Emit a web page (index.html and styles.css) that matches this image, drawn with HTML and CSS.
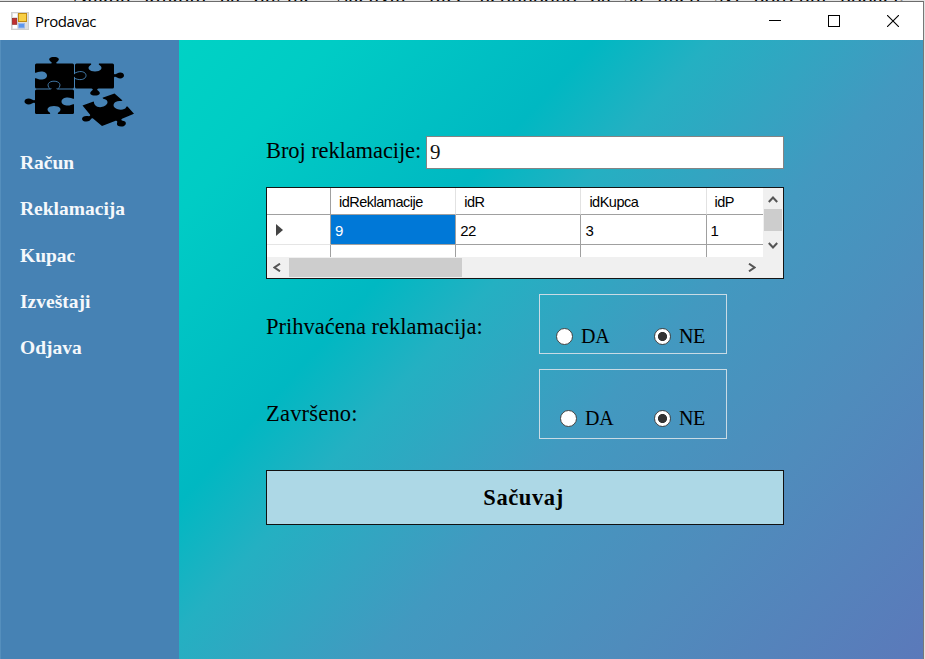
FILE: index.html
```
<!DOCTYPE html>
<html lang="sr">
<head>
<meta charset="utf-8">
<title>Prodavac</title>
<link rel="stylesheet" href="styles.css">
</head>
<body>
<div class="behind"><span>Nakon klikom na dugme „Sačuvaj“ biće neophodno da su uneti svi potrebni podaci.</span></div>
<div class="window">
  <header class="titlebar">
    <svg class="appicon" width="18" height="18" viewBox="0 0 18 18">
      <rect x=".5" y=".5" width="17" height="17" fill="#dedede" stroke="#cfcfcf"/>
      <rect x="2" y="1.500" width="4" height="3.500" fill="#fff"/><rect x="2" y="13" width="4" height="3.500" fill="#fff"/>
      <rect x="1.300" y="6.300" width="4.500" height="6" fill="#c03030" stroke="#8f1d1d" stroke-width=".6"/>
      <rect x="7.500" y="1.500" width="8" height="8" fill="#f8cf45" stroke="#c08a10"/>
      <rect x="7.500" y="11.500" width="6" height="4.500" fill="#5d97ee" stroke="#9db9ea"/>
    </svg>
    <h1 class="title">Prodavac</h1>
    <div class="controls">
      <svg width="12" height="12"><path d="M0 5.500H12" stroke="#000"/></svg>
      <svg width="12" height="12"><rect x=".5" y=".5" width="11" height="11" fill="none" stroke="#000"/></svg>
      <svg width="12" height="12"><path d="M0 0L12 12M12 0L0 12" stroke="#000" stroke-width="1.100"/></svg>
    </div>
  </header>
  <div class="body">
    <nav class="sidebar">
      <svg class="logo" width="110" height="70" viewBox="24 17 110 70">
        <rect x="35" y="23.500" width="39" height="25" rx="1.500"/>
        <rect x="75" y="23.500" width="39" height="25" rx="1.500"/>
        <rect x="35" y="49.500" width="39" height="24.500" rx="1.500"/>
        <path d="M50.500 24.500C52.500 23 52 22.500 50.500 21.500C47.500 19 50 17 54 17S60.500 19 57.500 21.500C56 22.500 55.500 23 57.500 24.500Z"/>
        <path d="M113 32.500C114.500 35 115.500 34.500 117 33.500C120.500 31.500 124 33 124 35.500S120.500 39.500 117 37.500C115.500 36.500 114.500 36 113 38.500Z"/>
        <path d="M91.500 48C93.500 49.500 93 50 91.500 51C88.500 53.500 91 55.500 95 55.500S101.500 53.500 98.500 51C97 50 96.500 49.500 98.500 48Z"/>
        <path d="M36 58.500C34.500 61 33.500 60.500 32 59.500C28.500 57.500 24.500 59 24.500 61.500S28.500 65.500 32 63.500C33.500 62.500 34.500 62 36 64.500Z"/>
        <g fill="#4682b4">
          <path d="M34 32.800C36 33 37 32.500 38 32C42 30.500 47 32 47 35.500S42 40.500 38 39C37 38.500 36 38 34 38.200Z"/>
          <path d="M91 23C91.500 24.500 91 25 90 25.500C86.500 28 89.500 31.500 95 31.500S103.500 28 100 25.500C99 25 98.500 24.500 99 23Z"/>
          <path d="M75 58.800C73 59 72 58.500 71 58C67 56.500 61.500 58 61.500 61.500S67 66.500 71 65C72 64.500 73 64 75 64.200Z"/>
          <path d="M50 74.500C50.500 73 50 72.500 49 72C45.500 69 48.500 66 54 66S62.500 69 59 72C58 72.500 57.500 73 58 74.500Z"/>
        </g>
        <path d="M50.500 50C52.500 48.500 52 48 50.500 47C47.500 44.500 50 42.500 54 42.500S60.500 44.500 57.500 47C56 48 55.500 48.500 57.500 50Z"/>
        <path d="M73 32.500C74.500 35 75.500 34.500 77 33.500C80.500 31.500 84.500 33 84.500 35.500S80.500 39.500 77 37.500C75.500 36.500 74.500 36 73 38.500Z"/>
        <g fill="none" stroke="#4682b4" stroke-width=".9">
          <path d="M50 48.800C46 45 48.500 41.200 54 41.200S62 45 58 48.800"/>
          <path d="M75 33C81 30 86 32 86 35.500S81 41 75 38.500"/>
        </g>
        <path d="M82.500 65.500L93.500 61.500C94.500 62 93.500 63 95 65C97.500 68 102 67.500 104.500 66C108.500 64 108 61 106 59.800C104.500 59 103.500 59.500 102.500 57.800L114.500 53.500L122.500 60.500C121 61.500 118 60.500 115.500 62C112.500 64 113 67.500 117 69C121 70.500 125 69.500 126 67.500C126.500 66.500 126 66.500 127.500 66.500L134 73.800L122 78.800C120.500 80 121.500 80.500 124.500 81.300C127 82.500 126 86 122.500 86.500C119 87 116.500 85.500 117 83.500C117.500 81.500 117.500 80.500 115 81L102 86L93 78.500C91 77.800 91.500 79.500 89.500 80.800C87 82.300 82 81.500 82 79C82 76.500 85 75.500 87.500 76C90 76.500 91 75.500 89.500 74Z"/>
      </svg>
      <a>Račun</a>
      <a>Reklamacija</a>
      <a>Kupac</a>
      <a>Izveštaji</a>
      <a>Odjava</a>
    </nav>
    <main class="content">
      <div class="number">
        <label for="num">Broj reklamacije:</label>
        <input id="num" type="text" value="9">
      </div>
      <div class="grid">
        <div class="view">
          <div class="row head"><span></span><span>idReklamacije</span><span>idR</span><span>idKupca</span><span>idP</span></div>
          <div class="row"><span class="marker"><svg width="7" height="12"><path d="M0 0L7 6L0 12Z" fill="#444"/></svg></span><span class="selected">9</span><span>22</span><span>3</span><span>1</span></div>
          <div class="row last"><span></span><span></span><span></span><span></span><span></span></div>
        </div>
        <div class="vscroll">
          <svg width="10" height="7"><path d="M.8 6L5 1.500L9.200 6" class="arrow"/></svg>
          <i></i>
          <svg width="10" height="7"><path d="M.8 1L5 5.500L9.200 1" class="arrow"/></svg>
        </div>
        <div class="hscroll">
          <svg width="8" height="9"><path d="M7 .7L1.500 4.500L7 8.300" class="arrow"/></svg>
          <i></i>
          <svg width="8" height="9"><path d="M1 .7L6.500 4.500L1 8.300" class="arrow"/></svg>
        </div>
      </div>
      <div class="choice accepted">
        <span class="caption">Prihvaćena reklamacija:</span>
        <div class="box">
          <label class="opt"><i class="radio"></i>DA</label>
          <label class="opt"><i class="radio on"></i>NE</label>
        </div>
      </div>
      <div class="choice finished">
        <span class="caption">Završeno:</span>
        <div class="box">
          <label class="opt"><i class="radio"></i>DA</label>
          <label class="opt"><i class="radio on"></i>NE</label>
        </div>
      </div>
      <button class="save">Sačuvaj</button>
    </main>
  </div>
</div>
</body>
</html>
```
FILE: styles.css
```
* { box-sizing: border-box; }
body {
  margin: 0;
  width: 925px;
  height: 659px;
  overflow: hidden;
  background: #e3e3e3;
  font-family: "Liberation Serif", serif;
  color: #000;
}
.behind {
  height: 1px;
  overflow: hidden;
  display: flex;
  align-items: flex-end;
  padding-left: 72px;
  font-size: 22px;
  line-height: 10px;
  white-space: nowrap;
  word-spacing: 7.800px;
}
.window {
  width: 924px;
  height: 658px;
  border-top: 1px solid #6c6c6c;
  border-right: 1px solid #777;
  display: flex;
  flex-direction: column;
}
.titlebar {
  height: 38px;
  flex: none;
  background: #fff;
  display: flex;
  align-items: center;
  padding: 0 24px 0 11px;
}
.title {
  margin: 0 0 0 6px;
  font: 400 15px/20px "Open Sans", "Noto Sans", sans-serif;
  letter-spacing: -.45px;
}
.controls { margin-left: auto; display: flex; gap: 47px; }
.body { flex: 1; display: flex; min-height: 0; }
.sidebar {
  width: 179px;
  background: #4682b4;
  border-left: 1px solid #558fbd;
  padding: 17px 0 0 19px;
  display: flex;
  flex-direction: column;
  color: #f5f8fb;
  font-weight: 700;
  font-size: 19.500px;
  line-height: 46.300px;
}
.logo { flex: none; margin: 0 0 13px 4px; }
.content {
  flex: 1;
  padding: 96px 139px 0 87px;
  background: linear-gradient(132deg, #00d2c5 0%, #00ccc5 12%, #00b8c2 32%, #24b0c2 41%, #4299c0 58%, #4f8cbc 76%, #5b79ba 100%);
}
.number { display: flex; justify-content: space-between; height: 33px; }
.number label { font-size: 22.500px; line-height: 29px; white-space: nowrap; letter-spacing: -.1px; }
.number input {
  width: 358px;
  flex: none;
  border: 1.500px solid #848484;
  padding: 0 3px;
  background: #fff;
  font: 21px "Liberation Serif", serif;
  color: #111;
}
.grid {
  margin-top: 18px;
  height: 92px;
  border: 1.500px solid #151515;
  background: #f0f0f0;
  display: grid;
  grid-template: 69px 1fr / 1fr 20px;
  font: 15px "Liberation Sans", sans-serif;
  letter-spacing: -.5px;
}
.view { background: #fff; overflow: hidden; min-width: 0; }
.row {
  display: grid;
  grid-template-columns: 64px repeat(4, 125.200px);
  grid-template-rows: 100%;
  width: 565px;
  height: 30px;
  line-height: 31px;
}
.row span { border-right: 1px solid #a0a0a0; border-bottom: 1px solid #a0a0a0; padding-left: 4px; }
.row.head { height: 27px; line-height: 28px; font-size: 14.500px; }
.row.head span { padding-left: 8px; border-right-color: #e2e2e2; }
.row.head span:first-child { border-right-color: #a0a0a0; }
.row .marker { display: flex; align-items: center; padding-left: 9px; border-bottom-color: #e5e5e5; }
.row .selected { background: #0078d7; color: #fff; }
.arrow { fill: none; stroke: #555; stroke-width: 2; }
.vscroll { display: flex; flex-direction: column; align-items: center; padding-top: 8px; }
.vscroll i { width: 18px; height: 22px; background: #cdcdcd; margin: 6px 0 11px; }
.hscroll { display: flex; align-items: center; padding-left: 6px; }
.hscroll i { width: 173px; height: 19px; background: #cdcdcd; margin: 0 286px 0 8px; flex: none; }
.hscroll svg { flex: none; }
.choice { display: flex; justify-content: space-between; padding-right: 57px; font-size: 22.500px; }
.choice .box {
  width: 188px;
  border: 1px solid #c9dbe5;
  display: flex;
  align-items: flex-end;
  justify-content: space-between;
  font-size: 20px;
}
.accepted { margin-top: 15px; height: 60px; }
.accepted .caption { line-height: 65px; }
.accepted .box { padding: 0 21px 5px 16px; }
.finished { margin-top: 15px; height: 70px; }
.finished .caption { line-height: 90px; letter-spacing: .2px; }
.finished .box { padding: 0 21px 8px 20px; }
.opt { display: flex; align-items: center; line-height: 24px; gap: 8px; letter-spacing: -.3px; }
.radio {
  width: 17px;
  height: 17px;
  border: 1.500px solid #444;
  border-radius: 50%;
  background: #fff;
}
.radio.on { background: radial-gradient(circle, #333 4.200px, #fff 4.900px); }
.save {
  display: block;
  width: 518px;
  height: 55px;
  margin-top: 31px;
  border: 1.500px solid #111;
  background: #add8e6;
  color: #000;
  padding: 0 3px 0 0;
  font: 700 22.500px "Liberation Serif", serif;
  letter-spacing: .6px;
}
```
